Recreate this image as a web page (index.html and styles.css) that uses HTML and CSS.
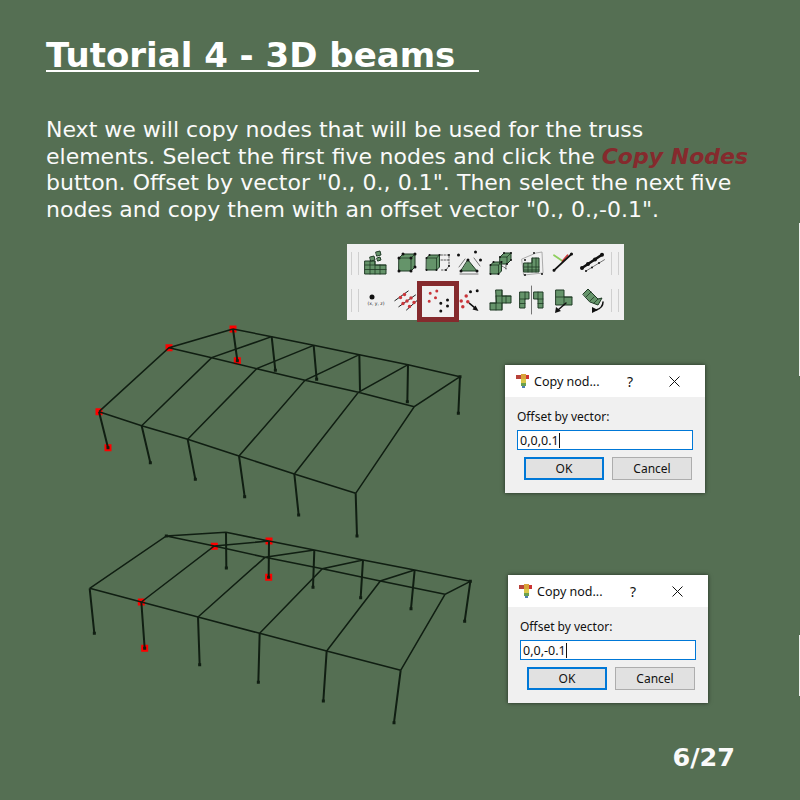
FILE: index.html
```html
<!DOCTYPE html>
<html lang="en">
<head>
  <meta charset="UTF-8">
  <title>Tutorial 4 - 3D beams</title>
  <link rel="stylesheet" href="styles.css">
</head>
<body>
  <main class="slide">
    <header class="intro">
      <h1>Tutorial 4 - 3D beams&nbsp;&nbsp;</h1>
      <p>Next we will copy nodes that will be used for the truss<br>
      <span class="wide">elements. Select the first five nodes and click the</span> <em>Copy Nodes</em><br>
      <span class="wider">button. Offset by vector "0., 0., 0.1". Then select the next five</span><br>
      nodes and copy them with an offset vector "0., 0.,-0.1".</p>
    </header>

    <!-- Toolbar -->
    <div class="toolbar">
      <span class="sep"></span>
      <svg class="icon" viewBox="0 0 31 34"><path class="g" d="M5 15h10v4h11v9H5z"/><path class="l" d="M5 19h21M5 23.500h21M10 15v13M15 15v13M20 19v9"/><path class="g" d="M10 11l4-1 1 4-4 1zM16 6l4-1 1 4-4 1zM17 12l3-1 1 3-3 1z"/></svg>
      <svg class="icon" viewBox="0 0 31 34"><path class="g" d="M8 12l4-4h12v13l-4 4H8z"/><path class="l" d="M8 12h12v13M20 12l4-4"/><path class="n" d="M8 12h0M12 8h0M24 8h0M24 21h0M20 25h0M8 25h0M20 12h0"/></svg>
      <svg class="icon" viewBox="0 0 31 34"><path class="g" d="M4.500 12l3-3h10v12l-3 3h-10z"/><path class="l" d="M4.500 12h10v12M14.500 12l3-3"/><path class="l dash" d="M19 9h8v11l-3 4h-6M19 14h8"/><path class="n small" d="M4.500 12h0M7.500 9h0M17.500 9h0M14.500 24h0M4.500 24h0M27 9h0M27 20h0M24 24h0"/></svg>
      <svg class="icon" viewBox="0 0 31 34"><path class="g" d="M14 14l9 11H7z"/><path class="thin dark" d="M5 21l6-8M26 20l-6-8M6 28h18"/><path class="n" d="M14 14h0M23 25h0M7 25h0M4.500 9h0M21.500 6h0M26.500 14h0"/></svg>
      <svg class="icon" viewBox="0 0 31 34"><path class="g" d="M15 11l4-4h7v7l-4 4h-7zM5.500 19l3-3h8v9l-3 3h-8z"/><path class="l" d="M15 11h7v7M22 11l4-4M5.500 19h8v9M13.500 19l3-3"/><path class="l dash" d="M17 20l5 3M21 19v4"/><path class="n small" d="M15 11h0M19 7h0M26 7h0M26 14h0M22 18h0M5.500 19h0M8.500 16h0M16.500 16h0M13.500 28h0M5.500 28h0"/></svg>
      <svg class="icon" viewBox="0 0 31 34"><path class="thin" d="M6 13l14-6 6-1 1 21-19 2z"/><path class="g" d="M8 17h8v-5h7v14H8z"/><path class="l" d="M8 21h15M8 24h15M12 17v9M16 12v14M20 12v14"/><path class="n small" d="M9 14h0M18 7h0M9 29h0M26 28h0"/></svg>
      <svg class="icon" viewBox="0 0 31 34"><path class="green" d="M7 9.300l8.500 5.700"/><path class="red" d="M15.500 15l5-5.700"/><path class="thick" d="M7 24.300L24.500 8"/><path class="n" d="M7 24.300h0M24.500 8h0"/></svg>
      <svg class="icon" viewBox="0 0 31 34"><path class="thick heavy" d="M4 22l20-13.300"/><path class="thin dark" d="M8 25l18.500-11.300"/><path class="n large-ish" d="M4 22h0M10 18h0M17 13.500h0M24 8.700h0"/><path class="n small" d="M8 25h0M14 21.500h0M21 17h0"/></svg>
      <span class="sep"></span>

      <span class="sep"></span>
      <svg class="icon" viewBox="0 0 31 34"><path class="n large" d="M12 14h0"/><text class="coord" x="16" y="22">(x, y, z)</text></svg>
      <svg class="icon" viewBox="0 0 31 34"><path class="thin black" d="M3.800 17.700L17.200 8M7.800 23.700L24.500 12M15.500 27l12.300-11"/><path class="r-dot" d="M9.500 14.500h0M13.500 11.500h0M12 20.500h0M16 18h0M20 15h0M18.500 23.500h0M23 19.500h0"/></svg>
      <svg class="icon" viewBox="0 0 31 34"><path class="r-dot small-dot" d="M8.200 10.300h0M14.800 8h0M7.200 18.300h0M13.500 14.700h0"/><path class="n" d="M18.800 20.300h0M25.500 17h0M25.500 23h0M18.800 28h0"/></svg>
      <svg class="icon" viewBox="0 0 31 34"><path class="r-dot" d="M7.200 18h0M12.200 13h0M13.800 18.700h0M8.800 23.700h0"/><path class="n" d="M16.500 8.700h0M23.200 7.700h0"/><path class="l arrow" d="M15.500 20.300l6 5"/><path class="n-fill" d="M24.500 28l-6-1.500 3-4z"/></svg>
      <svg class="icon" viewBox="0 0 31 34"><path class="g" d="M11 7h6v6h9v7h-9v7H5v-7h6z"/><path class="l" d="M11 13h15M5 20h12M11 13v14M17 7v20M21 13v7"/></svg>
      <svg class="icon" viewBox="0 0 31 34"><path class="g" d="M4 9h9v7H9v9H4zM18 9h9v16h-5v-9h-4z"/><path class="l" d="M4 16h5M4 20.500h5M9 9v7M27 16h-5M27 20.500h-5M22 9v7"/><path class="thin dark" d="M15.500 3v28"/></svg>
      <svg class="icon" viewBox="0 0 31 34"><path class="g" d="M9 7h8v7h8v8H9z"/><path class="l" d="M9 14h16M17 14v8"/><path class="l arrow" d="M19 20l-8 7"/><path class="n-fill" d="M8 30l1-6 5 4z"/></svg>
      <svg class="icon" viewBox="0 0 31 34"><path class="g" d="M5 11l5-5 5 5 5 5 4-1-4 7-8-3z"/><path class="l" d="M8 14l5-5M12 18l4-4M16 20l4-4"/><path class="l arrow" d="M25 19q0 6-7 8"/><path class="n-fill" d="M14 30l0-6 6 3z"/></svg>
      <span class="sep"></span>

      <span class="icon-active"></span>
    </div>

    <!-- First copy -->
    <section class="figure figure-top">
      <svg class="truss" viewBox="0 0 1200 660">
        <path class="picked" d="M459 27h0M267 83h0M57 275h0M84 383h0M472 122h0"/>
        <path class="beam" d="M57 275L185 317L323 358L477 408L643 462L827 520M267 83L395 113L530 146L675 181L835 217L1003 260M459 27L575 50L701 76L838 104L984 134L1140 170M57 275L267 83L459 27M185 317L395 113L575 50M323 358L530 146L701 76M477 408L675 181L838 104M643 462L835 217L984 134M827 520L1003 260L1140 170"/>
        <path class="column" d="M57 275L84 383M185 317L211 428M323 358L346 478M477 408L494 530M643 462L656 585M827 520L831 648M459 27L472 122M575 50L586 151M701 76L710 178M838 104L840 212M984 134L982 245M1140 170L1135 280"/>
        <path class="node" d="M84 383h0M211 428h0M346 478h0M494 530h0M656 585h0M831 648h0M472 122h0M586 151h0M710 178h0M982 245h0M1135 280h0M1140 170h0"/>
      </svg>
      <div class="dialog">
        <div class="dialog-title">
          <svg class="app-icon" viewBox="0 0 14 14"><path fill="#b8423a" d="M1 1h5v4H1z"/><path fill="#d9a33a" d="M6 0h5v5H6z"/><path fill="#c33" d="M11 1h3v4h-3z"/><path fill="#d8c84a" d="M6 5h5v4H6z"/><path fill="#6aa04f" d="M6 9h5v3H6z"/><path fill="#4d7fb0" d="M7 12h3v2H7z"/></svg>
          <span class="dialog-name">Copy nod...</span>
          <span class="dialog-help">?</span>
          <svg class="dialog-close" viewBox="0 0 11 11"><path d="M.5.500l10 10M10.500.500l-10 10"/></svg>
        </div>
        <div class="dialog-body">
          <label>Offset by vector:</label>
          <div class="field">0,0,0.1<span class="caret"></span></div>
          <div class="buttons">
            <button class="ok">OK</button>
            <button>Cancel</button>
          </div>
        </div>
      </div>
    </section>

    <!-- Second copy -->
    <section class="figure figure-bottom">
      <svg class="truss" viewBox="0 0 1200 600">
        <path class="picked" d="M403 64h0M567 48h0M184 231h0M194 370h0M566 157h0"/>
        <path class="beam" d="M29 190L184 231L354 276L539 325L740 378L962 436M259 33L403 63L555 97L727 131L901 168L1095 208M438 22L567 48L703 75L849 105L1004 135L1171 169M29 190L259 33L438 22M184 231L403 63L567 48M354 276L555 97L703 75M539 325L727 131L849 105M740 378L901 168L1004 135M962 436L1095 208L1171 169"/>
        <path class="column" d="M29 190L43 325M184 231L194 370M354 276L359 419M539 325L535 472M740 378L730 528M962 436L942 593M438 22L439 129M567 48L566 157M703 75L699 187M849 105L842 218M1004 135L993 251M1171 169L1154 289"/>
        <path class="node" d="M43 325h0M194 370h0M359 419h0M535 472h0M730 528h0M942 593h0M439 129h0M566 157h0M699 187h0M842 218h0M993 251h0M1154 289h0M259 33h0M1171 169h0"/>
      </svg>
      <div class="dialog">
        <div class="dialog-title">
          <svg class="app-icon" viewBox="0 0 14 14"><path fill="#b8423a" d="M1 1h5v4H1z"/><path fill="#d9a33a" d="M6 0h5v5H6z"/><path fill="#c33" d="M11 1h3v4h-3z"/><path fill="#d8c84a" d="M6 5h5v4H6z"/><path fill="#6aa04f" d="M6 9h5v3H6z"/><path fill="#4d7fb0" d="M7 12h3v2H7z"/></svg>
          <span class="dialog-name">Copy nod...</span>
          <span class="dialog-help">?</span>
          <svg class="dialog-close" viewBox="0 0 11 11"><path d="M.5.500l10 10M10.500.500l-10 10"/></svg>
        </div>
        <div class="dialog-body">
          <label>Offset by vector:</label>
          <div class="field">0,0,-0.1<span class="caret"></span></div>
          <div class="buttons">
            <button class="ok">OK</button>
            <button>Cancel</button>
          </div>
        </div>
      </div>
    </section>

    <footer class="page-number">6/27</footer>

    <span class="edge edge-top"></span>
    <span class="edge edge-bottom"></span>
  </main>
</body>
</html>
```

FILE: styles.css
```css
/* General Styles */
body {
  margin: 0;
  background-color: #556f53;
  font-family: "DejaVu Sans", sans-serif;
  color: #fff;
}

.slide {
  position: relative;
  width: 800px;
  height: 800px;
  overflow: hidden;
}

.intro {
  padding: 35px 46px 0;
  height: 209px;
  box-sizing: content-box;
}

.intro h1 {
  display: inline-block;
  margin: 0;
  font-size: 34px;
  line-height: 40px;
  font-weight: bold;
  text-decoration: underline;
  text-decoration-thickness: 2px;
  text-underline-offset: 3px;
}

.intro p {
  margin: 42px 0 0;
  font-size: 22px;
  line-height: 26.600px;
  color: #fafafa;
}

.intro em {
  font-style: italic;
  font-weight: bold;
  color: #852a2d;
}

.wide {
  word-spacing: 0.400px;
}

.wider {
  word-spacing: 0.200px;
}

/* Toolbar */
.toolbar {
  position: relative;
  display: grid;
  grid-template-columns: 10px repeat(8, 31.200px) 10px;
  grid-template-rows: 34px 34px;
  row-gap: 3px;
  align-items: center;
  box-sizing: border-box;
  width: 277px;
  height: 76px;
  margin-left: 347px;
  padding: 2px 0 0 3px;
  background-color: #f0f0f0;
}

.sep {
  width: 6px;
  height: 23px;
  margin-left: 1px;
  border-left: 1px solid #cfcfcf;
  border-right: 1px solid #cfcfcf;
}

.icon {
  width: 31px;
  height: 34px;
}

.icon-active {
  position: absolute;
  left: 70px;
  top: 37px;
  width: 42px;
  height: 41px;
  box-sizing: border-box;
  border: 5px solid #852a2d;
}

.icon path {
  stroke-linecap: round;
  stroke-linejoin: round;
}

.icon .g { fill: #65946a; stroke: #1f3a25; stroke-width: 1; }
.icon .l { fill: none; stroke: #1f3a25; stroke-width: 0.800; }
.icon .dash { stroke-dasharray: 1.500 1.500; stroke: #333; }
.icon .n { stroke: #111; stroke-width: 3; }
.icon .small { stroke-width: 2; }
.icon .large { stroke-width: 5; }
.icon .large-ish { stroke-width: 4; }
.icon .n-fill { fill: #111; }
.icon .arrow { stroke: #111; stroke-width: 1.500; }
.icon .r-dot { stroke: #c9353a; stroke-width: 3.500; }
.icon .small-dot { stroke-width: 3; }
.icon .thin { fill: none; stroke: #999; stroke-width: 0.800; }
.icon .dark { stroke: #555; }
.icon .black { stroke: #222; stroke-width: 1; }
.icon .thick { stroke: #111; stroke-width: 1.800; }
.icon .heavy { stroke-width: 2.500; }
.icon .green { stroke: #8ecf5d; stroke-width: 1.800; }
.icon .red { stroke: #cc3a3a; stroke-width: 1.800; }

.coord {
  font-size: 4.500px;
  text-anchor: middle;
  fill: #222;
}

/* Truss figures */
.figure {
  display: flex;
  align-items: flex-start;
  padding-left: 80px;
}

.figure-top {
  height: 205px;
  gap: 25px;
}

.figure-top .dialog {
  margin-top: 45px;
}

.figure-bottom {
  height: 200px;
  gap: 28px;
}

.figure-bottom .dialog {
  margin-top: 50px;
}

.truss {
  flex: none;
  width: 400px;
  overflow: visible;
  fill: none;
}

.figure-top .truss { height: 220px; }
.figure-bottom .truss { height: 200px; }

.beam { stroke: #101e12; stroke-width: 4.500; }
.column { stroke: #101e12; stroke-width: 6; }
.node { stroke: #101e12; stroke-width: 9; stroke-linecap: square; }
.picked { stroke: #ff0000; stroke-width: 21; stroke-linecap: square; }

/* Dialogs */
.dialog {
  flex: none;
  width: 200px;
  height: 128px;
  background-color: #f0f0f0;
  box-shadow: 0 0 4px rgba(0, 0, 0, 0.6);
  font-family: "Noto Sans", sans-serif;
  font-size: 12px;
  color: #111;
}

.dialog-title {
  display: flex;
  align-items: center;
  height: 32px;
  padding-left: 10px;
  background-color: #fff;
}

.app-icon {
  width: 14px;
  height: 14px;
  margin-right: 5px;
}

.dialog-name {
  width: 93px;
  font-size: 12.500px;
}

.dialog-help {
  width: 42px;
  font-size: 14px;
}

.dialog-close {
  width: 11px;
  height: 11px;
  fill: none;
  stroke: #111;
}

.dialog-body {
  padding: 11px 12px 0;
}

.dialog-body label {
  display: block;
  height: 22px;
  line-height: 17px;
}

.field {
  display: flex;
  align-items: center;
  box-sizing: border-box;
  height: 20px;
  padding-left: 2px;
  background-color: #fff;
  border: 1px solid #0078d7;
  font-size: 12.500px;
}

.caret {
  width: 1px;
  height: 15px;
  background-color: #111;
}

.buttons {
  display: flex;
  gap: 8px;
  margin: 7px 1px 0 7px;
}

.buttons button {
  width: 80px;
  height: 23px;
  padding: 0;
  background-color: #e1e1e1;
  border: 1px solid #adadad;
  border-radius: 0;
  font-family: inherit;
  font-size: 12px;
  color: #111;
}

.buttons .ok {
  border: 2px solid #0078d7;
}

.page-number {
  margin-top: 17px;
  padding-right: 65px;
  text-align: right;
  font-size: 25.500px;
  line-height: 30px;
  font-weight: bold;
  color: #fafafa;
}

/* thin light marks on the right border */
.edge {
  position: absolute;
  right: 0;
  width: 1px;
  background-color: #f0f0f0;
}

.edge-top {
  top: 223px;
  height: 153px;
}

.edge-bottom {
  top: 635px;
  height: 61px;
}
```
